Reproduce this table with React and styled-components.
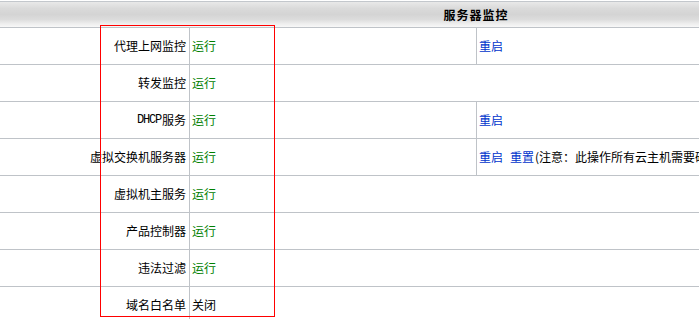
import React from "react";
import styled, { createGlobalStyle } from "styled-components";

const GlobalStyle = createGlobalStyle`
  html, body {
    margin: 0;
    padding: 0;
    background: #ffffff;
    overflow: hidden;
  }
  body {
    font-family: "Noto Sans CJK SC", "Noto Sans", sans-serif;
    font-size: 12px;
    color: #000000;
  }
`;

const Page = styled.div`
  position: relative;
  padding-top: 1px;
  width: 952px;
`;

const Table = styled.div`
  display: flex;
  flex-direction: column;
  width: 952px;
`;

const Header = styled.div`
  height: 25px;
  border-top: 1px solid #c3c7cc;
  border-bottom: 1px solid #bfc3c8;
  background: linear-gradient(
    to bottom,
    #e9e9e9 0%,
    #dadada 25%,
    #d4d4d4 50%,
    #dcdcdc 70%,
    #ececec 85%,
    #f8f8f8 100%
  );
  display: flex;
  align-items: center;
  justify-content: center;
  font-weight: bold;
  font-size: 12px;
  letter-spacing: 1px;
`;

const Row = styled.div`
  display: grid;
  grid-template-columns: 190px 287px 1fr;
  height: 36px;
  border-bottom: 1px solid #bfc3c8;
`;

const Cell = styled.div`
  display: flex;
  align-items: center;
  line-height: 16px;
  white-space: nowrap;
  overflow: hidden;
`;

const LabelCell = styled(Cell)`
  justify-content: flex-end;
  padding-right: 3px;
  border-right: 1px solid #bfc3c8;
`;

const StatusCell = styled(Cell)`
  padding-left: 2px;
  color: ${(p) => (p.$on ? "#008000" : "#000000")};
  grid-column: ${(p) => (p.$wide ? "span 2" : "auto")};
  border-right: ${(p) => (p.$wide ? "none" : "1px solid #bfc3c8")};
`;

const ActionCell = styled(Cell)`
  padding-left: 2px;
  gap: 7px;
`;

const Link = styled.a`
  color: #0033cc;
  text-decoration: none;
  cursor: pointer;
`;

const Note = styled.span`
  color: #000000;
  margin-left: -6px;
`;

/* Latin letters in the labels sit in narrow fixed-width cells */
const Latin = styled.span`
  font-family: "Liberation Mono", "DejaVu Sans Mono", monospace;
  font-size: 12px;
  letter-spacing: -1.2px;
  margin-right: 1px;
`;

const Highlight = styled.div`
  position: absolute;
  left: 100px;
  top: 25px;
  width: 175px;
  height: 292px;
  box-sizing: border-box;
  border: 1px solid #ff0000;
  pointer-events: none;
`;

const services = [
  { name: "代理上网监控", on: true, actions: ["重启"] },
  { name: "转发监控", on: true },
  { name: <><Latin>DHCP</Latin>服务</>, on: true, actions: ["重启"] },
  {
    name: "虚拟交换机服务器",
    on: true,
    actions: ["重启", "重置"],
    note: "(注意：此操作所有云主机需要硬重启)",
  },
  { name: "虚拟机主服务", on: true },
  { name: "产品控制器", on: true },
  { name: "违法过滤", on: true },
  { name: "域名白名单", on: false },
];

export default function App() {
  return (
    <>
      <GlobalStyle />
      <Page>
        <Table>
          <Header>服务器监控</Header>
          {services.map((s, i) => (
            <Row key={i}>
              <LabelCell>{s.name}</LabelCell>
              <StatusCell $on={s.on} $wide={!s.actions}>
                {s.on ? "运行" : "关闭"}
              </StatusCell>
              {s.actions && (
                <ActionCell>
                  {s.actions.map((a) => (
                    <Link key={a}>{a}</Link>
                  ))}
                  {s.note && <Note>{s.note}</Note>}
                </ActionCell>
              )}
            </Row>
          ))}
        </Table>
        <Highlight />
      </Page>
    </>
  );
}
